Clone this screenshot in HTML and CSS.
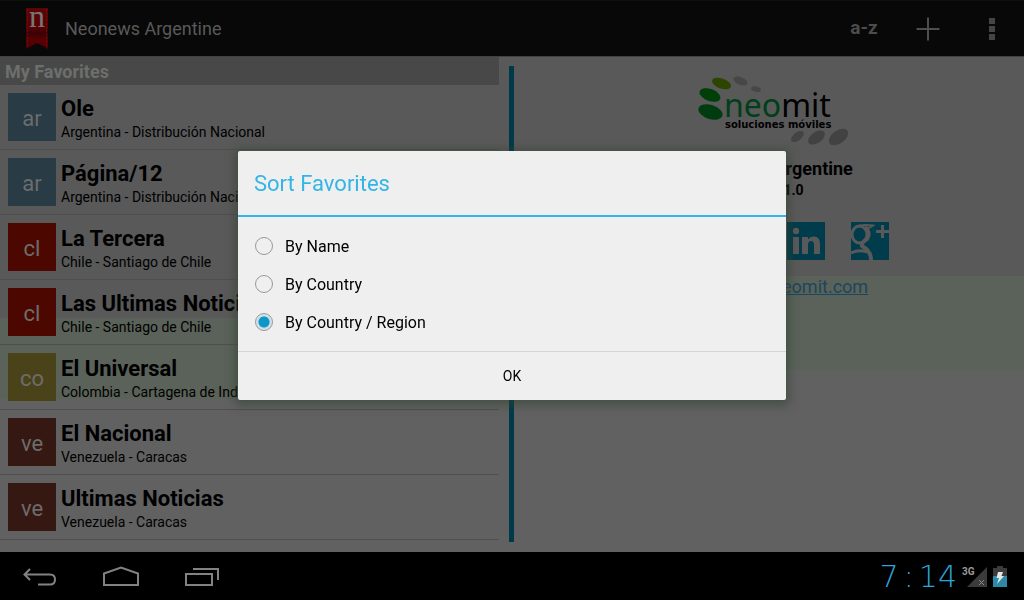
FILE: index.html
```html
<!DOCTYPE html>
<html lang="en">
<head>
<meta charset="utf-8">
<title>Neonews Argentine</title>
<link rel="stylesheet" href="styles.css">
</head>
<body>
<div class="screen">
  <header class="action-bar">
    <svg class="brand" width="22" height="41" viewBox="0 0 22 41" aria-hidden="true">
      <defs><linearGradient id="ribbon" x1="0" y1="0" x2="0" y2="1"><stop offset="0" stop-color="#5c0506"/><stop offset="0.5" stop-color="#560003"/><stop offset="0.6" stop-color="#3a0204"/><stop offset="0.8" stop-color="#5a0003"/><stop offset="1" stop-color="#4c0002"/></linearGradient></defs>
      <path d="M0 0H22V41L11 35L0 41Z" fill="url(#ribbon)"/>
      <path d="M1.5 1V38M20.500 1V38" stroke="#7a1a1c" stroke-width="0.6" stroke-dasharray="2 1.500"/>
      <text class="brand-letter" x="11" y="19" text-anchor="middle">n</text>
    </svg>
    <h1 class="app-title">Neonews Argentine</h1>
    <div class="actions">
      <button class="action" type="button" aria-label="Sort">a-z</button>
      <button class="action" type="button" aria-label="Add"><svg width="24" height="24" viewBox="0 0 24 24"><path d="M12 0.500V23.500M0.500 12H23.500" stroke="#4e4e4e" stroke-width="2"/></svg></button>
      <button class="action" type="button" aria-label="More"><svg width="6" height="22" viewBox="0 0 6 22"><path d="M0 0H6V6H0ZM0 8H6V14H0ZM0 16H6V22H0Z" fill="#454545"/></svg></button>
    </div>
  </header>

  <main class="content">
    <section class="favorites">
      <h2 class="section-title">My Favorites</h2>
      <ul class="list">
        <li class="row"><span class="tile ar">ar</span><div class="info"><h3 class="name">Ole</h3><p class="place">Argentina - Distribución Nacional</p></div></li>
        <li class="row"><span class="tile ar">ar</span><div class="info"><h3 class="name">Página/12</h3><p class="place">Argentina - Distribución Nacional</p></div></li>
        <li class="row"><span class="tile cl">cl</span><div class="info"><h3 class="name">La Tercera</h3><p class="place">Chile - Santiago de Chile</p></div></li>
        <li class="row"><span class="tile cl">cl</span><div class="info"><h3 class="name">Las Ultimas Noticias</h3><p class="place">Chile - Santiago de Chile</p></div></li>
        <li class="row"><span class="tile co">co</span><div class="info"><h3 class="name">El Universal</h3><p class="place">Colombia - Cartagena de Indias</p></div></li>
        <li class="row"><span class="tile ve">ve</span><div class="info"><h3 class="name">El Nacional</h3><p class="place">Venezuela - Caracas</p></div></li>
        <li class="row"><span class="tile ve">ve</span><div class="info"><h3 class="name">Ultimas Noticias</h3><p class="place">Venezuela - Caracas</p></div></li>
      </ul>
    </section>
    <div class="divider"></div>
    <section class="about">
      <svg class="logo" width="152" height="72" viewBox="0 0 152 72" role="img" aria-label="neomit soluciones móviles">
        <ellipse cx="12.500" cy="36" rx="12.500" ry="7" transform="rotate(18 12.500 36)" fill="#003c10"/>
        <ellipse cx="12" cy="19" rx="11" ry="6" transform="rotate(20 12 19)" fill="#003f08"/>
        <ellipse cx="23.500" cy="7.500" rx="10" ry="5" transform="rotate(20 23.500 7.500)" fill="#2c4600"/>
        <ellipse cx="42.500" cy="5" rx="7.500" ry="3.800" transform="rotate(22 42.500 5)" fill="#474747"/>
        <ellipse cx="58" cy="13" rx="5" ry="2.700" transform="rotate(15 58 13)" fill="#474747"/>
        <ellipse cx="99.500" cy="60.500" rx="7.500" ry="4" transform="rotate(-38 99.500 60.500)" fill="#444"/>
        <ellipse cx="118.500" cy="61.500" rx="9.500" ry="5.500" transform="rotate(-35 118.500 61.500)" fill="#424242"/>
        <ellipse cx="140.500" cy="61" rx="11" ry="6.500" transform="rotate(-36 140.500 61)" fill="#424242"/>
        <text class="logo-name" x="26" y="41"><tspan fill="#003f19">neo</tspan><tspan fill="#000">mit</tspan></text>
        <text class="logo-tag" x="27" y="52">soluciones móviles</text>
      </svg>
      <h2 class="about-title">Neonews Argentine</h2>
      <p class="version">Ver. 1.1.0</p>
      <nav class="social">
        <a class="social-link" href="#facebook" aria-label="Facebook"></a>
        <a class="social-link" href="#twitter" aria-label="Twitter"></a>
        <a class="social-link" href="#linkedin" aria-label="LinkedIn"><svg width="38" height="38" viewBox="0 0 38 38"><circle cx="9" cy="9" r="3.200" fill="#595959"/><path d="M6 15H12V32H6ZM15 15H21V17.500Q23 14.500 27 14.500Q33 14.500 33 22V32H27V23Q27 19 24 19Q21 19 21 23V32H15Z" fill="#595959"/></svg></a>
        <a class="social-link" href="#googleplus" aria-label="Google Plus"><svg width="38" height="38" viewBox="0 0 38 38"><g fill="none" stroke="#595959"><ellipse cx="8.500" cy="12.500" rx="7.500" ry="8.500" stroke-width="3"/><path d="M5 4.500Q11 2 22 3.500L17 6.500" stroke-width="2"/><path d="M14 5Q20 11 16 17Q10 21 11 24Q20 29 20 38" stroke-width="4"/><path d="M0 31Q8 27 16 30" stroke-width="3"/><path d="M31.500 3V16M25 9.500H38" stroke-width="3"/></g></svg></a>
      </nav>
      <a class="site" href="#site">http://www.neomit.com</a>
    </section>
  </main>

  <footer class="system-bar">
    <button class="nav-key" type="button" aria-label="Back"><svg width="36" height="22" viewBox="0 0 36 22"><path d="M8 3L2.500 8.500L8 14M2.500 8.500H28Q33 8.500 33 13.500Q33 18.500 28 18.500H16" fill="none" stroke="#828282" stroke-width="2"/></svg></button>
    <button class="nav-key" type="button" aria-label="Home"><svg width="36" height="22" viewBox="0 0 36 22"><path d="M1 19V7.500L18 1.500L35 7.500V19Z" fill="none" stroke="#828282" stroke-width="2"/></svg></button>
    <button class="nav-key" type="button" aria-label="Recent apps"><svg width="36" height="22" viewBox="0 0 36 22"><path d="M2 8H28V19H2ZM9 3H34V14" fill="none" stroke="#828282" stroke-width="2"/></svg></button>
    <div class="status">
      <time class="clock"><span>7</span><span>:</span><span>14</span></time>
      <svg width="26" height="22" viewBox="0 0 26 22" aria-label="3G signal"><path d="M25 1V21H5Z" fill="#3b3b3b"/><path d="M17 14L22 19M22 14L17 19" stroke="#8a8a8a"/><text class="network" x="0" y="9">3G</text></svg>
      <svg width="14" height="22" viewBox="0 0 14 22" aria-label="Battery charging"><path d="M4 0H10V2H14V11H0V2H4Z" fill="#3b3b3b"/><path d="M0 10H14V21H0Z" fill="#2c89a8"/><path d="M5 6H10L8.500 10H11L4 18L6 12H3.500Z" fill="#e6e6e6"/></svg>
    </div>
  </footer>
</div>

<div class="overlay">
  <form class="dialog" role="dialog" aria-labelledby="dialog-title">
    <h2 class="dialog-title" id="dialog-title">Sort Favorites</h2>
    <div class="options">
      <label class="option"><input class="radio" type="radio" name="sort">By Name</label>
      <label class="option"><input class="radio" type="radio" name="sort">By Country</label>
      <label class="option"><input class="radio" type="radio" name="sort" checked>By Country / Region</label>
    </div>
    <button class="ok" type="button">OK</button>
  </form>
</div>
</body>
</html>
```
FILE: styles.css
```css
* { box-sizing: border-box; }
body, h1, h2, h3, p, ul { margin: 0; padding: 0; }
body { font-family: Roboto, sans-serif; background: #000; color: #000; }
button { border: 0; padding: 0; background: none; font-family: inherit; }
svg { display: block; overflow: visible; }

.screen { display: grid; grid-template-rows: 56px 1fr 48px; height: 100vh; overflow: hidden; }

.action-bar { display: flex; align-items: center; padding-left: 26px; background: #080808; border-top: 1px solid #0a120a; }
.brand-letter { font: 32px "Liberation Serif", serif; fill: #777; }
.app-title { margin-left: 17px; font-size: 18px; font-weight: 400; color: #595959; }
.actions { display: flex; margin-left: auto; height: 100%; }
.action { display: flex; align-items: center; justify-content: center; width: 64px; font-size: 20px; font-weight: 700; color: #4c4c4c; }
.action:first-child { font-size: 19px; padding-bottom: 3px; }

.content {
  display: grid;
  grid-template-columns: 1fr auto 1fr;
  min-height: 0;
  border-top: 1px solid #414141;
  background:
    linear-gradient(#595959 52.700%, #5a6259 52.700% 69%, #616161 69%) left / 50% 100% no-repeat,
    linear-gradient(#595959 44.200%, #5a6259 44.200% 63.300%, #616161 63.300%) right / 50% 100% no-repeat;
}
.favorites { min-width: 0; }
.section-title { padding: 1px 5px 0; background: #484848; font-size: 18px; line-height: 27px; color: #6c6f6c; }
.list { list-style: none; }
.row { display: flex; align-items: center; gap: 5px; height: 65px; padding: 0 8px; border-bottom: 1px solid #4f4f4f; white-space: nowrap; }
.tile { display: flex; align-items: center; justify-content: center; width: 48px; height: 48px; padding-top: 2px; font-size: 22px; color: #6c6c6c; }
.ar { background: #293b45; }
.cl { background: #4c0800; }
.co { background: #4a431a; }
.ve { background: #351811; }
.info { padding-top: 3px; }
.name { font-size: 22px; line-height: 28px; font-weight: 700; }
.place { font-size: 14px; line-height: 19px; }

.divider { width: 5px; margin: 9px 11px 10px 10px; background: #003a4a; }

.about { display: flex; flex-direction: column; align-items: center; padding: 19px 12px 0 10px; }
.about-title { margin-top: 10px; font-size: 18px; line-height: 22px; }
.version { font-size: 14px; line-height: 20px; font-weight: 700; }
.social { display: flex; gap: 26px; margin-top: 22px; }
.social-link { width: 38px; height: 38px; background: #003c4c; }
.site { margin-top: 16px; font-size: 18px; line-height: 22px; color: #1b4660; }
.logo-name { font: 32px "Noto Sans", sans-serif; }
.logo-tag { font: 700 10px "DejaVu Sans", sans-serif; }

.system-bar { display: flex; align-items: center; gap: 45px; padding: 2px 17px 0 22px; background: #000; }
.status { display: flex; align-items: center; gap: 5px; margin-left: auto; }
.clock { display: flex; gap: 5px; font: 200 30px/28px "DejaVu Sans Light", "DejaVu Sans", sans-serif; color: #2ca5d8; }
.network { font: 700 10px Roboto, sans-serif; fill: #999; }

.overlay { position: fixed; inset: 0 0 49px; display: flex; align-items: center; justify-content: center; }
.dialog { width: 548px; max-width: 90%; background: #efefef; border-radius: 2px; box-shadow: 0 2px 8px 4px rgba(50, 66, 50, 0.5); }
.dialog-title { padding: 1px 16px 0; border-bottom: 2px solid #33b5e5; font-size: 22px; line-height: 63px; font-weight: 400; color: #33b5e5; }
.options { padding: 10px 17px; }
.option { display: flex; align-items: center; gap: 12px; height: 38px; font-size: 16px; }
.radio { appearance: none; width: 18px; height: 18px; margin: 0; border: 1px solid #999; border-radius: 50%; }
.radio:checked { background: radial-gradient(circle, #0f96c8 5px, #c3dde7 6px, #dce6ea 8px); }
.ok { display: block; width: 100%; height: 49px; border-top: 1px solid #d4d4d4; font-size: 14px; color: #000; }
```
